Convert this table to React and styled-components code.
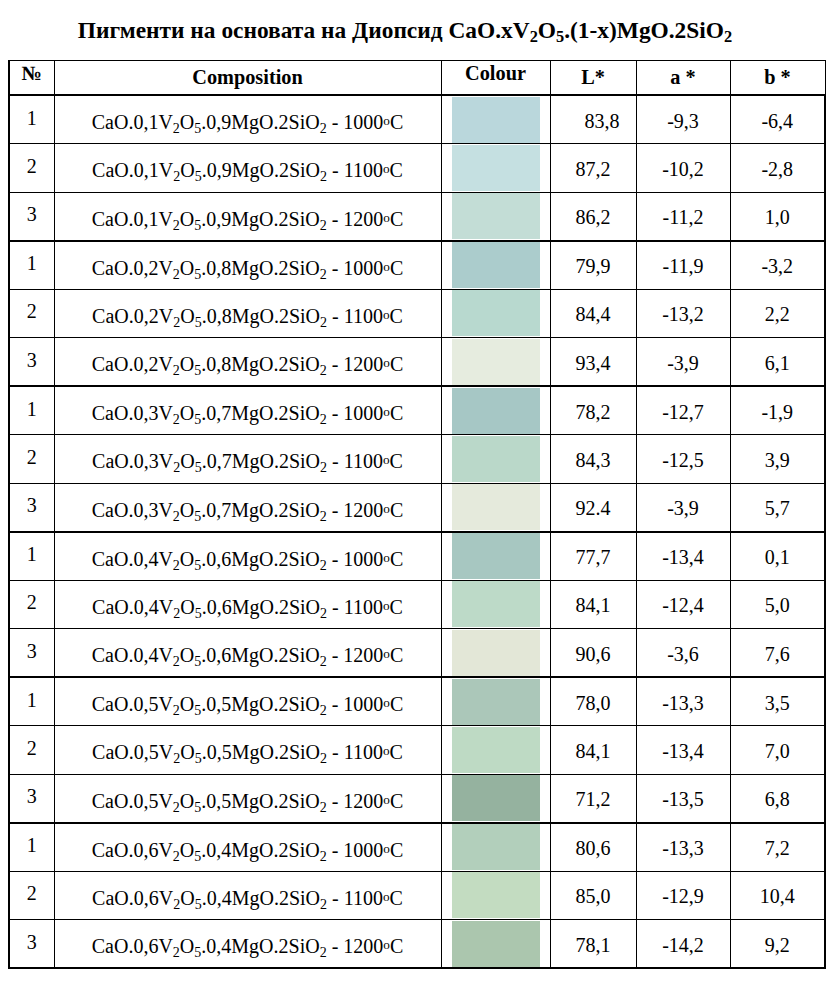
import styled, { createGlobalStyle } from 'styled-components'

const GlobalStyle = createGlobalStyle`
  body {
    margin: 0;
    background: #ffffff;
    color: #000000;
    font-family: "Liberation Serif", "Times New Roman", serif;
  }`

const Page = styled.div`
  width: 838px;
  padding: 16px 0 20px 8px;
  box-sizing: border-box;`

const Title = styled.h1`
  margin: 0 0 16px -8px;
  padding-right: 28px;
  font-size: 23.4px;
  line-height: 28px;
  font-weight: bold;
  text-align: center;`

const Table = styled.table`
  width: 816px;
  border-collapse: collapse;
  table-layout: fixed;`

const HeadCell = styled.th`
  height: 32px;
  padding: ${p => (p.$top ? '1px 0 0' : '0')};
  vertical-align: ${p => (p.$top ? 'top' : 'middle')};
  border: 1px solid #000;
  border-bottom: 2px solid #000;
  border-left-width: ${p => (p.$first ? '2px' : '1px')};
  font-size: 20.3px;
  font-weight: bold;
  text-align: center;`

const Row = styled.tr`
  height: 48.5px;`

const Cell = styled.td`
  padding: ${p => p.$pad || '0'};
  border: 1px solid #000;
  border-left-width: ${p => (p.$first ? '2px' : '1px')};
  border-right-width: ${p => (p.$last ? '2px' : '1px')};
  border-bottom-width: ${p => (p.$groupEnd ? '2px' : '1px')};
  font-size: 20px;
  line-height: 22px;
  text-align: center;
  vertical-align: middle;
  white-space: nowrap;`

const Swatch = styled.div`
  height: 46px;
  margin: 0 10px;
  background: ${p => p.$color};`

const Sub = styled.sub`
  font-size: 0.7em;
  line-height: 0;
  vertical-align: -0.25em;`

const Sup = styled.sup`
  font-size: 0.66em;
  line-height: 0;
  vertical-align: 0.3em;`

const groups = [
  {
    x: '0,1', rest: '0,9',
    rows: [
      ['#bad7dc', '83,8', '-9,3', '-6,4'],
      ['#c5e0e1', '87,2', '-10,2', '-2,8'],
      ['#c3ddd6', '86,2', '-11,2', '1,0'],
    ],
  },
  {
    x: '0,2', rest: '0,8',
    rows: [
      ['#abcccc', '79,9', '-11,9', '-3,2'],
      ['#b8d9cf', '84,4', '-13,2', '2,2'],
      ['#e6ecdf', '93,4', '-3,9', '6,1'],
    ],
  },
  {
    x: '0,3', rest: '0,7',
    rows: [
      ['#a6c7c5', '78,2', '-12,7', '-1,9'],
      ['#bad8c9', '84,3', '-12,5', '3,9'],
      ['#e5eadc', '92.4', '-3,9', '5,7'],
    ],
  },
  {
    x: '0,4', rest: '0,6',
    rows: [
      ['#a7c7c1', '77,7', '-13,4', '0,1'],
      ['#bddac8', '84,1', '-12,4', '5,0'],
      ['#e3e7d7', '90,6', '-3,6', '7,6'],
    ],
  },
  {
    x: '0,5', rest: '0,5',
    rows: [
      ['#abc7b9', '78,0', '-13,3', '3,5'],
      ['#bedac4', '84,1', '-13,4', '7,0'],
      ['#95b29f', '71,2', '-13,5', '6,8'],
    ],
  },
  {
    x: '0,6', rest: '0,4',
    rows: [
      ['#b2cfbb', '80,6', '-13,3', '7,2'],
      ['#c3dcc1', '85,0', '-12,9', '10,4'],
      ['#abc6ae', '78,1', '-14,2', '9,2'],
    ],
  },
]

const temps = ['1000', '1100', '1200']

function Formula({ x, rest, temp }) {
  return (
    <>
      CaO.{x}V<Sub>2</Sub>O<Sub>5</Sub>.{rest}MgO.2SiO<Sub>2</Sub> - {temp}<Sup>o</Sup>C
    </>
  )
}

export default function App() {
  return (
    <Page>
      <GlobalStyle />
      <Title>
        Пигменти на основата на Диопсид CaO.xV<Sub>2</Sub>O<Sub>5</Sub>.(1-x)MgO.2SiO<Sub>2</Sub>
      </Title>
      <Table>
        <colgroup>
          <col style={{ width: 45 }} />
          <col style={{ width: 387 }} />
          <col style={{ width: 109 }} />
          <col style={{ width: 86 }} />
          <col style={{ width: 94 }} />
          <col style={{ width: 95 }} />
        </colgroup>
        <thead>
          <tr>
            <HeadCell $first $top>№</HeadCell>
            <HeadCell>Composition</HeadCell>
            <HeadCell $top>Colour</HeadCell>
            <HeadCell>L*</HeadCell>
            <HeadCell>a *</HeadCell>
            <HeadCell>b *</HeadCell>
          </tr>
        </thead>
        <tbody>
          {groups.map((g, gi) =>
            g.rows.map(([color, l, a, b], ri) => {
              const end = ri === 2
              const shifted = gi === 0 && ri === 0
              return (
                <Row key={`${gi}-${ri}`}>
                  <Cell $first $groupEnd={end} $pad="0 0 4px">{ri + 1}</Cell>
                  <Cell $groupEnd={end} $pad="5px 0 0">
                    <Formula x={g.x} rest={g.rest} temp={temps[ri]} />
                  </Cell>
                  <Cell $groupEnd={end}>
                    <Swatch $color={color} />
                  </Cell>
                  <Cell $groupEnd={end} $pad={shifted ? '2px 0 0 18px' : '2px 0 0'}>{l}</Cell>
                  <Cell $groupEnd={end} $pad="2px 0 0">{a}</Cell>
                  <Cell $last $groupEnd={end} $pad="2px 0 0">{b}</Cell>
                </Row>
              )
            })
          )}
        </tbody>
      </Table>
    </Page>
  )
}
